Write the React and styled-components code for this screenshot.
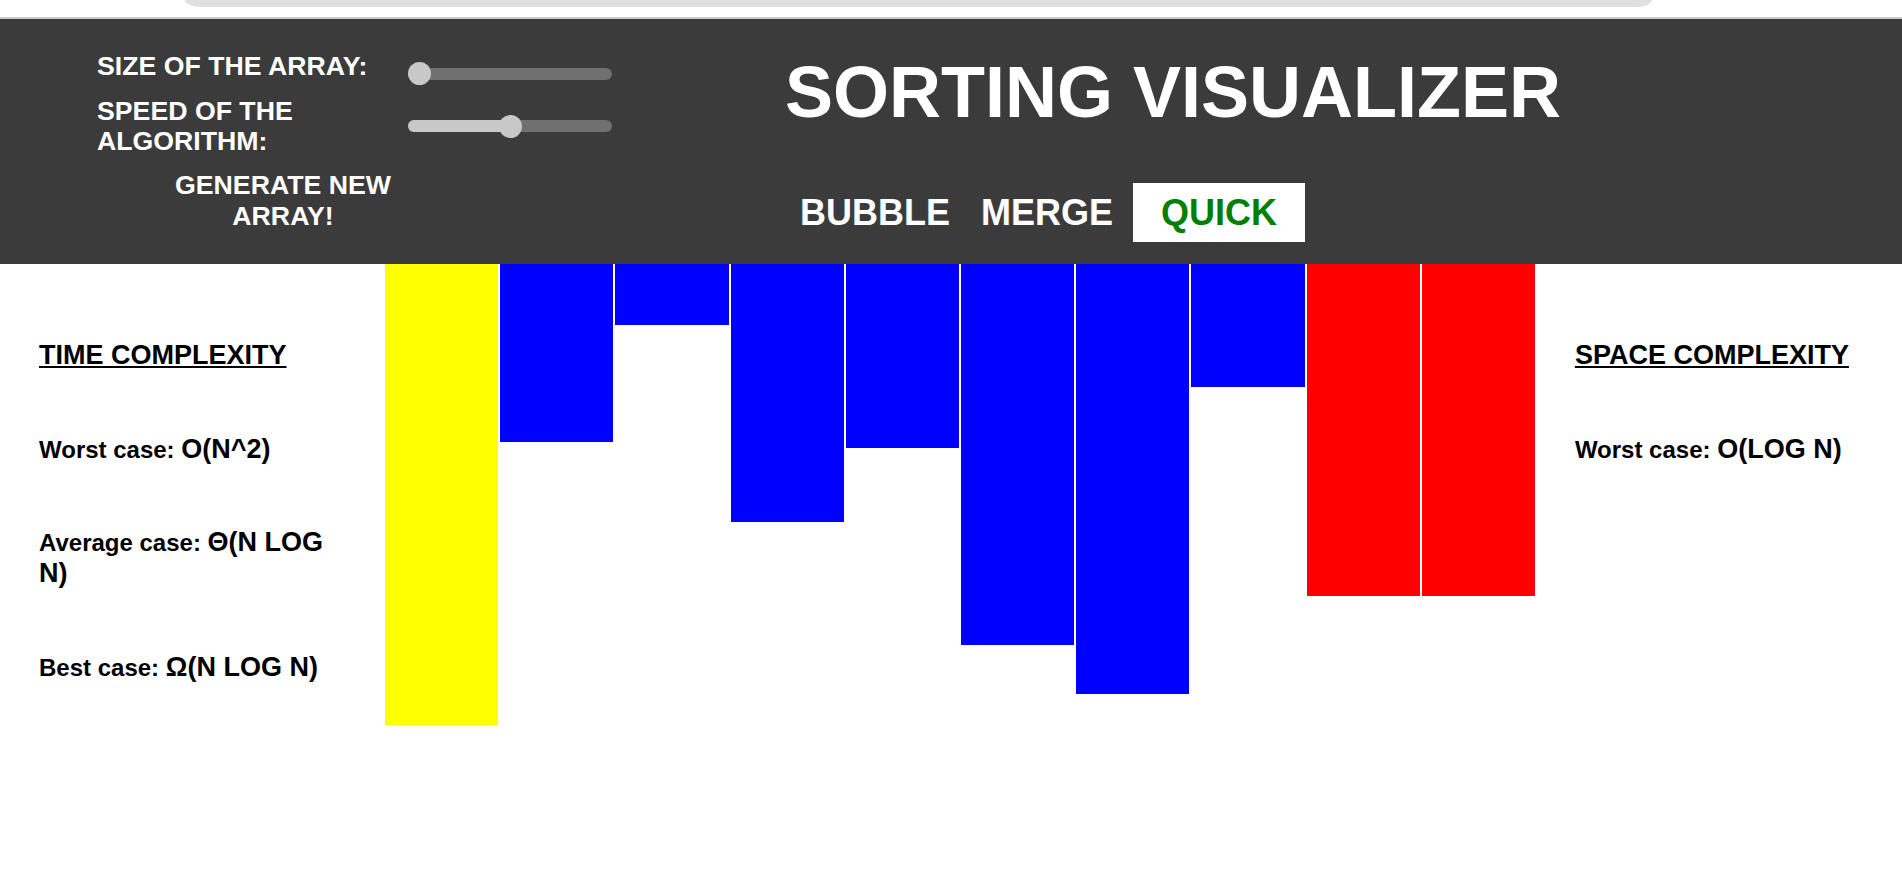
import React from 'react';
import styled, { createGlobalStyle } from 'styled-components';

const GlobalStyle = createGlobalStyle`
  html, body { margin: 0; padding: 0; background: #ffffff; }
  body { font-family: "Liberation Sans", Arial, Helvetica, sans-serif; }
  * { box-sizing: border-box; }
`;

const Page = styled.div`
  width: 1902px;
  min-height: 885px;
  overflow: hidden;
  background: #ffffff;
`;

const TopStrip = styled.div`
  height: 7px;
  margin: 0 250px 0 185px;
  background: #e0e0e0;
  border-radius: 0 0 16px 16px / 0 0 7px 7px;
`;

const Header = styled.header`
  margin-top: 10px;
  height: 247px;
  border-top: 2px solid #c8c8c8;
  background: #3b3b3b;
  display: flex;
  align-items: flex-start;
  gap: 173px;
  padding: 32px 0 0 97px;
  color: #ffffff;
  font-weight: bold;
`;

const Controls = styled.div`
  width: 515px;
  display: flex;
  flex-direction: column;
  align-items: flex-start;
`;

const ControlRow = styled.div`
  display: grid;
  grid-template-columns: 311px 204px;
  align-items: center;
  min-height: 45px;
`;

const ControlLabel = styled.div`
  align-self: start;
  font-size: 26.7px;
  line-height: 30px;
  font-weight: bold;
  text-transform: uppercase;
`;

const Track = styled.div`
  position: relative;
  width: 204px;
  height: 12px;
  border-radius: 6px;
  background: #707070;
`;

const Fill = styled.div`
  position: absolute;
  left: 0;
  top: 0;
  bottom: 0;
  border-radius: 6px;
  background: #c8c8c8;
`;

const Thumb = styled.div`
  position: absolute;
  top: 50%;
  width: 23px;
  height: 23px;
  margin-top: -11.5px;
  border-radius: 50%;
  background: #c8c8c8;
`;

const Slider = ({ value }) => {
  const left = value * (204 - 23);
  return (
    <Track>
      <Fill style={{ width: value > 0 ? left + 11.5 : 0 }} />
      <Thumb style={{ left }} />
    </Track>
  );
};

const GenerateButton = styled.button`
  margin: 14px 0 0 61px;
  width: 250px;
  padding: 0;
  border: none;
  background: transparent;
  color: #ffffff;
  font-family: inherit;
  font-size: 26.7px;
  line-height: 31px;
  font-weight: bold;
  text-align: center;
  cursor: pointer;
`;

const TitleSection = styled.div`
  display: flex;
  flex-direction: column;
  align-items: flex-start;
`;

const Title = styled.h1`
  margin: 0;
  font-size: 72px;
  line-height: normal;
  font-weight: bold;
  color: #ffffff;
`;

const Nav = styled.nav`
  margin-top: 50px;
  display: flex;
  align-items: center;
  gap: 1px;
`;

const AlgoButton = styled.button`
  border: none;
  margin-left: ${p => (p.$active ? '4px' : '0')};
  padding: ${p => (p.$active ? '8.5px 28px' : '8.5px 15px')};
  background: ${p => (p.$active ? '#ffffff' : 'transparent')};
  color: ${p => (p.$active ? '#008000' : '#ffffff')};
  font-family: inherit;
  font-size: 36px;
  line-height: normal;
  font-weight: bold;
  cursor: pointer;
`;

const Main = styled.main`
  display: flex;
  align-items: flex-start;
`;

const InfoPanel = styled.section`
  flex: 0 0 ${p => p.$width}px;
  padding: 76px 0 0 ${p => p.$pad}px;
`;

const InfoColumn = styled.div`
  width: 300px;
  display: flex;
  flex-direction: column;
  gap: 62.5px;
  color: #000000;
`;

const InfoHeading = styled.h2`
  margin: 0;
  font-size: 27px;
  line-height: normal;
  font-weight: bold;
  text-decoration: underline;
`;

const InfoLine = styled.p`
  margin: 0;
  font-size: 24px;
  line-height: 30px;
  font-weight: bold;
`;

const Value = styled.span`
  font-size: 27px;
`;

const Bars = styled.div`
  display: flex;
  align-items: flex-start;
`;

const Bar = styled.div`
  width: 113.2px;
  margin: 0 1px;
  background: ${p => p.$color};
`;

const bars = [
  { h: 461, c: '#ffff00' },
  { h: 178, c: '#0000ff' },
  { h: 61, c: '#0000ff' },
  { h: 258, c: '#0000ff' },
  { h: 184, c: '#0000ff' },
  { h: 381, c: '#0000ff' },
  { h: 430, c: '#0000ff' },
  { h: 123, c: '#0000ff' },
  { h: 332, c: '#ff0000' },
  { h: 332, c: '#ff0000' },
];

export default function App() {
  return (
    <Page>
      <GlobalStyle />
      <TopStrip />
      <Header>
        <Controls>
          <ControlRow>
            <ControlLabel>Size of the array:</ControlLabel>
            <Slider value={0} />
          </ControlRow>
          <ControlRow>
            <ControlLabel>Speed of the algorithm:</ControlLabel>
            <Slider value={0.503} />
          </ControlRow>
          <GenerateButton>GENERATE NEW ARRAY!</GenerateButton>
        </Controls>
        <TitleSection>
          <Title>SORTING VISUALIZER</Title>
          <Nav>
            <AlgoButton>BUBBLE</AlgoButton>
            <AlgoButton>MERGE</AlgoButton>
            <AlgoButton $active>QUICK</AlgoButton>
          </Nav>
        </TitleSection>
      </Header>
      <Main>
        <InfoPanel $width={384} $pad={39}>
          <InfoColumn>
            <InfoHeading>TIME COMPLEXITY</InfoHeading>
            <InfoLine>Worst case: <Value>O(N^2)</Value></InfoLine>
            <InfoLine>Average case: <Value>Θ(N LOG N)</Value></InfoLine>
            <InfoLine>Best case: <Value>Ω(N LOG N)</Value></InfoLine>
          </InfoColumn>
        </InfoPanel>
        <Bars>
          {bars.map((b, i) => (
            <Bar key={i} $color={b.c} style={{ height: b.h }} />
          ))}
        </Bars>
        <InfoPanel $width={360} $pad={39}>
          <InfoColumn>
            <InfoHeading>SPACE COMPLEXITY</InfoHeading>
            <InfoLine>Worst case: <Value>O(LOG N)</Value></InfoLine>
          </InfoColumn>
        </InfoPanel>
      </Main>
    </Page>
  );
}
